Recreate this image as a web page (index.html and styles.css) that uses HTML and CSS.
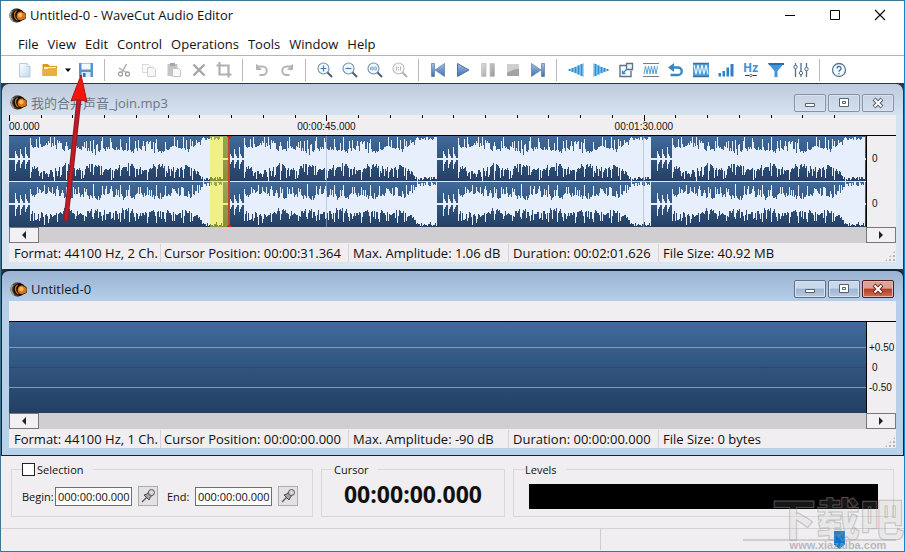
FILE: index.html
```
<!DOCTYPE html>
<html lang="en">
  <head>
    <meta charset="UTF-8">
    <meta name="viewport" content="width=device-width, initial-scale=1">
    <title>Untitled-0 - WaveCut Audio Editor</title>
    <link rel="stylesheet" href="styles.css">
  </head>
  <body>

    <svg class="defs" width="0" height="0" aria-hidden="true">
      <defs>
        <linearGradient id="g-wave" x1="0" y1="0" x2="0" y2="1">
          <stop offset="0" stop-color="#406a9b"/><stop offset="1" stop-color="#233f63"/>
        </linearGradient>
        <linearGradient id="g-play" x1="0" y1="0" x2="0" y2="1">
          <stop offset="0" stop-color="#a3c2e6"/><stop offset="1" stop-color="#3c6cae"/>
        </linearGradient>
        <linearGradient id="g-gray" x1="0" y1="0" x2="1" y2="1">
          <stop offset="0" stop-color="#dcdcdc"/><stop offset="1" stop-color="#989898"/>
        </linearGradient>
        <linearGradient id="g-page" x1="0" y1="0" x2="1" y2="1">
          <stop offset="0" stop-color="#ffffff"/><stop offset="1" stop-color="#bcd9ec"/>
        </linearGradient>
      </defs>
      <symbol id="logo" viewBox="0 0 18 18">
        <circle cx="8" cy="9" r="7.6" fill="#4d4843"/>
        <path d="M3 4a8 8 0 0 0 1 11" fill="none" stroke="#a49a8c" stroke-width="1.6"/>
        <circle cx="10" cy="9" r="6.6" fill="#0c0a09"/>
        <path d="M8 4a6 6 0 0 0 1 10" fill="none" stroke="#c96f1c" stroke-width="1.4"/>
        <circle cx="12.6" cy="9.4" r="4.6" fill="#d9730f"/>
        <circle cx="12" cy="8.6" r="2.4" fill="#ffb75c"/>
        <path d="M14 5.5a4 4 0 0 1 0 8" fill="none" stroke="#5c2a05" stroke-width="1.2"/>
      </symbol>
      <symbol id="pin" viewBox="0 0 16 16">
        <path d="M2 14l5-5" stroke="#555" stroke-width="1.2"/>
        <path d="M4 7l5 5 1.500-3 1.500-1.500L9 3.500 7 6z" fill="#a5a5a5" stroke="#3e3e3e" stroke-width=".9"/>
        <circle cx="11.500" cy="4.500" r="3" fill="#d8d8d8" stroke="#4a4a4a" stroke-width=".9"/>
      </symbol>
    </svg>

    <div class="app">

      <header class="titlebar">
        <svg class="logo"><use href="#logo"/></svg>
        <h1 class="title">Untitled-0 - WaveCut Audio Editor</h1>
        <div class="win-btns">
          <button class="win-btn" aria-label="Minimize"><svg width="12" height="12"><path d="M1 6.500h10" stroke="#000"/></svg></button>
          <button class="win-btn" aria-label="Maximize"><svg width="12" height="12"><path d="M1.500 1.500h9v9h-9z" fill="none" stroke="#000"/></svg></button>
          <button class="win-btn" aria-label="Close"><svg width="12" height="12"><path d="M1 1l10 10M11 1L1 11" stroke="#000" stroke-width="1.1"/></svg></button>
        </div>
      </header>

      <nav class="menu">
        <button>File</button>
        <button>View</button>
        <button>Edit</button>
        <button>Control</button>
        <button>Operations</button>
        <button>Tools</button>
        <button>Window</button>
        <button>Help</button>
      </nav>

      <div class="toolbar" role="toolbar">
        <button class="tool" aria-label="New"><svg viewBox="0 0 16 16"><path d="M2.500 1.500h7.500l3 3v10.500h-10.500z" fill="url(#g-page)" stroke="#b9cbd8"/><path d="M10 1.500v3h3" fill="#fff" stroke="#b9cbd8"/></svg></button>
        <button class="tool" aria-label="Open"><svg viewBox="0 0 16 16"><path d="M.5 2h5.500l1.500 2h7.500v10h-14.500z" fill="#d99a22"/><path d="M2 5h12v3h-12z" fill="#fff3cf"/><path d="M.5 7h5l1-1h8.500v8h-14.500z" fill="#e5b040"/></svg></button>
        <button class="tool tool-caret" aria-label="Recent files"><svg viewBox="0 0 11 16"><path d="M3 6.500h6l-3 3.500z" fill="#000"/></svg></button>
        <button class="tool" aria-label="Save"><svg viewBox="0 0 16 16"><path d="M1 1h14v14h-14z" fill="#5b93cd"/><path d="M3.500 1.500h9v6h-9z" fill="#f3f8fd"/><path d="M3.500 10h9v5h-9z" fill="#dfeaf5"/><path d="M5 11h2.500v4h-2.500z" fill="#3c70ab"/></svg></button>
        <span class="sep"></span>
        <button class="tool" aria-label="Cut"><svg viewBox="0 0 16 16"><path d="M10.500 2L6 10.500M3 6l8 5" fill="none" stroke="#ababab" stroke-width="1.400"/><circle cx="4.500" cy="12" r="2" fill="none" stroke="#a2a2a2" stroke-width="1.300"/><circle cx="11.500" cy="12" r="2" fill="none" stroke="#a2a2a2" stroke-width="1.300"/></svg></button>
        <button class="tool" aria-label="Copy"><svg viewBox="0 0 16 16"><path d="M1.500 2.500h6l2 2v6h-8z" fill="#fafafa" stroke="#d9d9d9"/><path d="M6.500 5.500h6l2 2v7h-8z" fill="#f7f7f7" stroke="#cfcfcf"/></svg></button>
        <button class="tool" aria-label="Paste"><svg viewBox="0 0 16 16"><path d="M1.500 2h10v12h-10z" fill="#c5c5c5"/><path d="M4 1h5v3h-5z" fill="#a7a7a7"/><path d="M6.500 6.500h6l2 2v6h-8z" fill="#f8f8f8" stroke="#c4c4c4"/></svg></button>
        <button class="tool" aria-label="Delete"><svg viewBox="0 0 16 16"><path d="M2.500 2.500l11 11M13.500 2.500l-11 11" stroke="#a6a6a6" stroke-width="2.400"/></svg></button>
        <button class="tool" aria-label="Crop"><svg viewBox="0 0 16 16"><path d="M3.500 0v12.500h12M.5 3.500h12v12" fill="none" stroke="#b0b0b0" stroke-width="2.200"/></svg></button>
        <span class="sep"></span>
        <button class="tool" aria-label="Undo"><svg viewBox="0 0 16 16"><path d="M3 4.500h5.500a4 4 0 0 1 0 8.500h-3" fill="none" stroke="#b4b4b4" stroke-width="2"/><path d="M2 1.500v6.500h6z" fill="#b4b4b4"/></svg></button>
        <button class="tool" aria-label="Redo"><svg viewBox="0 0 16 16"><path d="M13 4.500h-5.500a4 4 0 0 0 0 8.500h3" fill="none" stroke="#b4b4b4" stroke-width="2"/><path d="M14 1.500v6.500h-6z" fill="#b4b4b4"/></svg></button>
        <span class="sep"></span>
        <button class="tool" aria-label="Zoom in"><svg viewBox="0 0 16 16"><circle cx="6.500" cy="6.500" r="5.500" fill="#f4f9fd" stroke="#7590a8" stroke-width="1.100"/><path d="M10.500 10.500l4.500 4.500" stroke="#4b5f72" stroke-width="2"/><path d="M3.500 6.500h6M6.500 3.500v6" stroke="#3c7cc0" stroke-width="1.200"/></svg></button>
        <button class="tool" aria-label="Zoom out"><svg viewBox="0 0 16 16"><circle cx="6.500" cy="6.500" r="5.500" fill="#f4f9fd" stroke="#7590a8" stroke-width="1.100"/><path d="M10.500 10.500l4.500 4.500" stroke="#4b5f72" stroke-width="2"/><path d="M3.500 6.500h6" stroke="#3c7cc0" stroke-width="1.200"/></svg></button>
        <button class="tool" aria-label="Zoom to fit"><svg viewBox="0 0 16 16"><circle cx="6.500" cy="6.500" r="5.500" fill="#f4f9fd" stroke="#7590a8" stroke-width="1.100"/><path d="M10.500 10.500l4.500 4.500" stroke="#4b5f72" stroke-width="2"/><path d="M3.500 5v3M4.800 5h1.400v3h-1.400zM7.800 5h1.600v3h-1.600z" fill="none" stroke="#6ba0d4" stroke-width=".8"/></svg></button>
        <button class="tool" aria-label="Actual size"><svg viewBox="0 0 16 16"><circle cx="6.500" cy="6.500" r="5.500" fill="#fafafa" stroke="#bcbcbc" stroke-width="1.100"/><path d="M10.500 10.500l4.500 4.500" stroke="#b0b0b0" stroke-width="2"/><path d="M4.500 4.500v4M8.500 4.500v4M6.500 5v1M6.500 7.500v1" stroke="#b5b5b5"/></svg></button>
        <span class="sep"></span>
        <button class="tool" aria-label="Go to start"><svg viewBox="0 0 16 16"><path d="M1.500 1.500h3v13h-3zM14.500 1.500v13L5 8z" fill="url(#g-play)" stroke="#6785a8" stroke-width=".8"/></svg></button>
        <button class="tool" aria-label="Play"><svg viewBox="0 0 16 16"><path d="M2.500 1.500v13L14 8z" fill="url(#g-play)" stroke="#4f719d"/></svg></button>
        <button class="tool" aria-label="Pause"><svg viewBox="0 0 16 16"><path d="M1.500 1.500h4.500v13h-4.500zM10 1.500h4.500v13h-4.500z" fill="url(#g-gray)" stroke="#c2c2c2" stroke-width=".8"/></svg></button>
        <button class="tool" aria-label="Stop"><svg viewBox="0 0 16 16"><path d="M2 2.500h12v11.500h-12z" fill="#a3a3a3"/><path d="M2 2.500h12v4Q8 7 2 11z" fill="#cfcfcf"/></svg></button>
        <button class="tool" aria-label="Go to end"><svg viewBox="0 0 16 16"><path d="M11.500 1.500h3v13h-3zM1.500 1.500v13L11 8z" fill="url(#g-play)" stroke="#6785a8" stroke-width=".8"/></svg></button>
        <span class="sep"></span>
        <button class="tool" aria-label="Fade in"><svg viewBox="0 0 16 16"><path d="M0 8L16 1v14z" fill="#9fd2f3"/><path d="M1.500 7v2M4.500 6v4M7.500 5v6M10.500 3.500v9M13.500 2v12" stroke="#2f8fd6" stroke-width="1.800"/></svg></button>
        <button class="tool" aria-label="Fade out"><svg viewBox="0 0 16 16"><path d="M16 8L0 1v14z" fill="#9fd2f3"/><path d="M14.500 7v2M11.500 6v4M8.500 5v6M5.500 3.500v9M2.500 2v12" stroke="#2f8fd6" stroke-width="1.800"/></svg></button>
        <button class="tool" aria-label="Stretch"><svg viewBox="0 0 16 16"><path d="M8 3.500h-6v11h11v-6" fill="none" stroke="#5b7288" stroke-width="1.400"/><path d="M8.500 1.500h6v6h-6z" fill="#eef6fd" stroke="#5b7288" stroke-width="1.300"/><path d="M4.500 11.500l4.500-4.500M4.500 8.500v3h3" fill="none" stroke="#338cd4" stroke-width="1.300"/></svg></button>
        <button class="tool" aria-label="Vibrato"><svg viewBox="0 0 16 16"><path d="M0 1.500h16M0 14.500h16" stroke="#6f7f8e" stroke-width="1.200"/><path d="M1 12l1.500-8M4 12l1.500-8M7 12l1.500-8M10 12l1.500-8M13 12l1.500-8M2.500 4l1.500 8M5.500 4l1.500 8M8.500 4l1.500 8M11.500 4l1.500 8" fill="none" stroke="#55a5dd"/></svg></button>
        <button class="tool" aria-label="Reverse"><svg viewBox="0 0 16 16"><path d="M3 5.500h7a3.700 3.700 0 0 1 0 7.500h-7.500" fill="none" stroke="#3a87c6" stroke-width="2.400"/><path d="M0 5.500L6 1v9z" fill="#3a87c6"/></svg></button>
        <button class="tool" aria-label="Normalize"><svg viewBox="0 0 16 16"><path d="M0 2h16v12h-16z" fill="#4da0dc"/><path d="M1 3l2 9 2-9 2 9 2-9 2 9 2-9 2 9" fill="none" stroke="#e3f3fd" stroke-width="1.200"/><path d="M0 1.500h16M0 14.500h16" stroke="#3f6c94" stroke-width="1.300"/></svg></button>
        <button class="tool" aria-label="Amplify"><svg viewBox="0 0 16 16"><path d="M.5 11h2.500v3.500h-2.500zM4.500 9h2.500v5.500h-2.500zM8.500 5.500h2.500v9h-2.500zM12.500 2h3v12.500h-3z" fill="#2d7fc8"/></svg></button>
        <button class="tool tool-hz" aria-label="Sample rate"><span>Hz</span><svg viewBox="0 0 16 6"><path d="M1 3h5M10 3h5" stroke="#333" stroke-width="1.400"/><circle cx="8" cy="3" r="1.500" fill="none" stroke="#555"/></svg></button>
        <button class="tool" aria-label="Filter"><svg viewBox="0 0 16 16"><path d="M0 1.500h16L9.500 9v6h-3V9z" fill="#3e98da"/><path d="M0 1h16v2h-15z" fill="#2b6da8"/></svg></button>
        <button class="tool" aria-label="Equalizer"><svg viewBox="0 0 16 16"><path d="M2.500 1v14M8 1v14M13.500 1v14" stroke="#4f6f8c" stroke-width="1.300"/><circle cx="2.500" cy="5" r="1.700" fill="#fff" stroke="#4f6f8c"/><circle cx="8" cy="11" r="1.700" fill="#fff" stroke="#4f6f8c"/><circle cx="13.500" cy="7" r="1.700" fill="#fff" stroke="#4f6f8c"/></svg></button>
        <span class="sep"></span>
        <button class="tool" aria-label="Help"><svg viewBox="0 0 16 16"><circle cx="8" cy="8" r="6.500" fill="#f5fafe" stroke="#587897" stroke-width="1.300"/><path d="M6 6.500a2 2 0 1 1 2.800 1.800Q8 8.800 8 9.800M8 11v1.200" fill="none" stroke="#3d6d9c" stroke-width="1.300"/></svg></button>
      </div>

      <main class="workspace">

        <section class="child">
          <header class="child-title">
            <svg class="logo"><use href="#logo"/></svg>
            <h2 class="title">我的合并声音_join.mp3</h2>
            <div class="child-btns">
              <button class="child-btn" aria-label="Minimize"><svg width="14" height="12"><path d="M2.500 6.500h9v3h-9z" fill="#fff" stroke="#566273"/></svg></button>
              <button class="child-btn" aria-label="Restore"><svg width="14" height="12"><path d="M2.500 1.500h9v8h-9z" fill="#fff" stroke="#566273"/><path d="M5.500 4.500h3v2h-3z" fill="none" stroke="#566273"/></svg></button>
              <button class="child-btn" aria-label="Close"><svg width="14" height="12"><path d="M3 2l8 8M11 2l-8 8" stroke="#566273" stroke-width="4"/><path d="M3.500 2.500l7 7M10.500 2.500l-7 7" stroke="#fff" stroke-width="2"/></svg></button>
            </div>
          </header>
          <div class="ruler">
            <div class="ticks" data-count="27"></div>
            <div class="times"><span>00.000</span><span>00:00:45.000</span><span>00:01:30.000</span></div>
          </div>
          <div class="wave-row">
            <svg class="wave" viewBox="0 0 857 91" preserveAspectRatio="none" shape-rendering="crispEdges">
              <rect width="857" height="46" fill="url(#g-wave)"/>
              <rect y="46" width="857" height="45" fill="url(#g-wave)"/>
              <path id="wave-shape" fill="#e6effb"/>
              <rect y="45" width="857" height="1" fill="#d9ece8"/>
              <path d="M317 0h1v91h-1zM634 0h1v91h-1z" fill="#9db4cc" fill-opacity=".6"/>
              <rect x="201" width="19" height="91" fill="#fff000" fill-opacity=".46"/>
              <rect x="219" width="2" height="91" fill="#c8402f"/>
              <path d="M217 0h6l-3 3zM217 91h6l-3-3z" fill="#e01818"/>
            </svg>
            <div class="scale scale-stereo"><span>0</span><span>0</span></div>
          </div>
          <div class="scroll">
            <button class="scroll-btn" aria-label="Scroll left"><svg width="8" height="8"><path d="M6 0v8L2 4z" fill="#222"/></svg></button>
            <button class="scroll-btn" aria-label="Scroll right"><svg width="8" height="8"><path d="M2 0v8l4-4z" fill="#222"/></svg></button>
          </div>
          <footer class="status">
            <span>Format: 44100 Hz, 2 Ch.</span>
            <span>Cursor Position: 00:00:31.364</span>
            <span>Max. Amplitude: 1.06 dB</span>
            <span>Duration: 00:02:01.626</span>
            <span>File Size: 40.92 MB</span>
            <i class="grip"></i>
          </footer>
        </section>

        <section class="child child-active">
          <header class="child-title">
            <svg class="logo"><use href="#logo"/></svg>
            <h2 class="title">Untitled-0</h2>
            <div class="child-btns">
              <button class="child-btn" aria-label="Minimize"><svg width="14" height="12"><path d="M2.500 6.500h9v3h-9z" fill="#fff" stroke="#566273"/></svg></button>
              <button class="child-btn" aria-label="Restore"><svg width="14" height="12"><path d="M2.500 1.500h9v8h-9z" fill="#fff" stroke="#566273"/><path d="M5.500 4.500h3v2h-3z" fill="none" stroke="#566273"/></svg></button>
              <button class="child-btn child-btn-close" aria-label="Close"><svg width="14" height="12"><path d="M3 2l8 8M11 2l-8 8" stroke="#6b2a26" stroke-width="4"/><path d="M3.500 2.500l7 7M10.500 2.500l-7 7" stroke="#fff" stroke-width="2"/></svg></button>
            </div>
          </header>
          <div class="ruler"></div>
          <div class="wave-row">
            <svg class="wave" viewBox="0 0 857 91" preserveAspectRatio="none">
              <rect width="857" height="91" fill="url(#g-wave)"/>
              <path d="M0 25h857v1H0zM0 65h857v1H0z" fill="#7f9cbd"/>
              <path d="M0 45h857v1H0z" fill="#8f1f33"/>
            </svg>
            <div class="scale scale-mono"><span>+0.50</span><span class="zero">0</span><span>-0.50</span></div>
          </div>
          <div class="scroll">
            <button class="scroll-btn" aria-label="Scroll left"><svg width="8" height="8"><path d="M6 0v8L2 4z" fill="#222"/></svg></button>
            <button class="scroll-btn" aria-label="Scroll right"><svg width="8" height="8"><path d="M2 0v8l4-4z" fill="#222"/></svg></button>
          </div>
          <footer class="status">
            <span>Format: 44100 Hz, 1 Ch.</span>
            <span>Cursor Position: 00:00:00.000</span>
            <span>Max. Amplitude: -90 dB</span>
            <span>Duration: 00:00:00.000</span>
            <span>File Size: 0 bytes</span>
            <i class="grip"></i>
          </footer>
        </section>

      </main>

      <form class="panels" action="">
        <fieldset class="panel panel-selection">
          <legend><input type="checkbox" id="selection"><label for="selection">Selection</label></legend>
          <label for="begin">Begin:</label>
          <input class="time" type="text" id="begin" value="000:00:00.000">
          <button type="button" class="pin" aria-label="Set begin"><svg width="16" height="16"><use href="#pin"/></svg></button>
          <label class="label-end" for="end">End:</label>
          <input class="time" type="text" id="end" value="000:00:00.000">
          <button type="button" class="pin" aria-label="Set end"><svg width="16" height="16"><use href="#pin"/></svg></button>
        </fieldset>
        <fieldset class="panel panel-cursor">
          <legend>Cursor</legend>
          <output class="clock">00:00:00.000</output>
        </fieldset>
        <fieldset class="panel panel-levels">
          <legend>Levels</legend>
          <div class="meter"></div>
        </fieldset>
      </form>

      <footer class="app-status">
        <div class="app-status-text"></div>
        <input class="volume" type="range" min="0" max="100" value="64" aria-label="Volume">
      </footer>

      <svg class="arrow" width="40" height="160" viewBox="0 0 40 160" aria-hidden="true">
        <path d="M8 146L21 26" stroke="#8c1c22" stroke-width="5" stroke-linecap="round"/>
        <path d="M8 146L21 26" stroke="#c01a24" stroke-width="3" stroke-linecap="round"/>
        <path d="M23 2L29 29Q21 25 13 28z" fill="#f3160d" stroke="#a8161a" stroke-width="1"/>
      </svg>
      <div class="watermark" aria-hidden="true"><b>下载吧</b><span>www.xiazaiba.com</span></div>

    </div>

    <script src="editor.js"></script>

  </body>
</html>
```
FILE: styles.css
```
* { box-sizing: border-box }
body { margin: 0; background: #f0eef0; color: #111 }
body, button, input { font-family: "Open Sans", "Noto Sans CJK SC", sans-serif; font-size: 13px }
button { border: 0; padding: 0; background: none; color: inherit }
h1, h2 { margin: 0; font-weight: normal }
.defs { position: absolute }

.app {
  position: relative;
  display: flex;
  flex-direction: column;
  min-height: 100vh;
  border: 1px solid #3d7795;
  border-right-color: #1b83c9;
  overflow: hidden;
}

/* title bar and menu */

.titlebar { display: flex; align-items: center; height: 30px; padding: 0 2px 2px 8px; background: #fff }
.logo { width: 17px; height: 17px; margin-right: 4px; flex: none }
.title { flex: 1; font-size: 13px; line-height: 18px }
.win-btns { display: flex }
.win-btn { width: 45px; height: 28px; display: flex; align-items: center; justify-content: center }

.menu { display: flex; gap: 9px; height: 25px; padding-left: 17px; background: #fff; border-bottom: 1px solid #b5b5b5 }
.menu button { line-height: 26px }

/* toolbar */

.toolbar { display: flex; align-items: center; height: 27px; padding-left: 11px; background: #fff }
.tool { width: 25px; height: 26px; display: flex; flex: none; align-items: center; justify-content: center }
.tool svg { width: 16px; height: 16px }
.tool-caret { width: 11px }
.tool-caret svg { width: 11px }
.tool-hz { flex-direction: column; color: #3a93d6; font-weight: bold; font-size: 12px; line-height: 11px }
.tool-hz svg { height: 5px }
.sep { flex: none; width: 13px; height: 22px; background: linear-gradient(#b9b9b9, #b9b9b9) center / 1px 100% no-repeat }

/* document windows */

.workspace { background: #29394d }
.child {
  padding: 0 7px 7px;
  border: 1px solid #29394d;
  border-width: 1px 1px 0;
  border-radius: 8px 8px 0 0;
  background: linear-gradient(#bfcbdc, #d5e2f0 31px, #d9e6f2);
}
.child-active { border-top-width: 2px; border-bottom-width: 1px; border-color: #12243a; background: linear-gradient(#99b3d2, #b6cfe9 31px, #b8d2ea) }
.child-title { display: flex; align-items: center; height: 31px; padding: 6px 2px 0 1px; color: #6d7785 }
.child-active .child-title { height: 30px; color: #141c28 }
.child-btns { display: flex; gap: 2px }
.child-btn {
  display: flex;
  align-items: center;
  justify-content: center;
  width: 32px;
  height: 18px;
  border: 1px solid #8593a8;
  border-radius: 2px;
  box-shadow: inset 0 0 0 1px #d9e3ef;
}
.child-active .child-btn { border-color: #5d7088; background: linear-gradient(#c9d8ea 45%, #9db4d0 50%, #b8cce3) }
.child-active .child-btn-close { border-color: #561a1c; background: linear-gradient(#dda196 45%, #b93a24 50%, #cf7057); box-shadow: inset 0 0 0 1px #e6b5aa }

.ruler { height: 21px; padding-right: 30px; background: #f0eef0; border-bottom: 1px solid #000; font: 10px/12px "Liberation Sans", sans-serif; overflow: hidden }
.ticks { display: flex; height: 6px }
.tick { flex: 1; height: 3px; border-left: 1px solid #000 }
.tick-major { height: 6px }
.times { display: grid; grid-template-columns: 10fr 10fr 7fr }
.times span { justify-self: start; transform: translateX(-50%) }
.times span:first-child { transform: none }

.wave-row { display: grid; grid-template-columns: 1fr 30px; height: 91px }
.wave { display: block; width: 100%; height: 91px }
.scale { display: flex; flex-direction: column; border-left: 1px solid #000; background: #f0eef0; font: 10px/20px "Liberation Sans", sans-serif }
.scale-stereo { justify-content: space-around; padding-left: 5px }
.scale-mono { justify-content: center; padding-left: 2px }
.zero { padding-left: 3px }

.scroll { display: flex; justify-content: space-between; height: 16px; background: #d0ced0 }
.scroll-btn { width: 30px; display: flex; align-items: center; justify-content: center; border: 1px solid #77777c; background: #f2f0f2 }

.status {
  display: grid;
  grid-template-columns: 151px 188px 160px 150px 1fr auto;
  padding-top: 1px;
  background: #f0eef0;
  line-height: 18px;
  white-space: nowrap;
}
.status span { padding-left: 4px; border-left: 1px solid #d5d3d5 }
.status span:first-child { padding-left: 5px; border: 0 }
.status span:nth-child(2) { padding-left: 3px }
.grip {
  align-self: end;
  width: 12px;
  height: 12px;
  background: radial-gradient(#b5b3b5 1px, transparent 1px) 0 0 / 4px 4px;
  clip-path: polygon(100% 0, 100% 100%, 0 100%);
}

/* bottom panels */

.panels { display: grid; grid-template-columns: 302px 184px 1fr; gap: 8px; padding: 6px 10px 11px 9px; border-left: 1px solid #e6f3fb }
.panel { display: flex; align-items: center; min-width: 0; height: 55px; margin: 0; padding: 0 10px; border: 1px solid #d9d7d9; font-size: 11px }
.panel input, .panel legend { font-size: 11px }
.panel legend { display: flex; align-items: center; height: 14px; padding: 0 9px 0 2px }
.panel-selection legend { padding-left: 0 }
.panel-selection legend input { appearance: none; width: 13px; height: 13px; margin: 0 2px 0 0; border: 1px solid #222; background: #fff }
.panel-selection > label { width: 33px }
.panel-selection > .label-end { width: 28px; margin-left: 9px }
.panel-selection > .time { width: 77px; height: 19px; padding: 0 0 0 2px; border: 1px solid #6e6e73; background: #fff; color: #111 }
.pin { display: flex; align-items: center; justify-content: center; width: 20px; height: 20px; margin-left: 6px; border: 1px solid #adabad; background: #e3e1e3 }
.panel-cursor legend { padding-left: 2px }
.panel-levels legend { margin-left: -4px; padding-left: 0 }
.panel-cursor { justify-content: center }
.clock { font-size: 23px; line-height: 26px; font-weight: bold; padding-bottom: 4px }
.panel-levels { padding: 0 15px }
.meter { width: 100%; height: 25px; background: #000 }

/* status line */

.app-status { display: flex; flex: 1; min-height: 23px; border-top: 1px solid #d3d1d3; border-bottom: 1px solid #e6f3fb }
.app-status-text { width: 600px; border-right: 1px solid #cfcdcf }
.volume { appearance: none; width: 153px; height: 20px; margin: 1px 8px 0 auto; background: linear-gradient(#cfcdcf, #cfcdcf) center / 100% 2px no-repeat }
.volume::-webkit-slider-thumb { appearance: none; width: 11px; height: 18px; background: #0b76cf; clip-path: polygon(0 0, 100% 0, 100% 75%, 50% 100%, 0 75%) }

/* overlays */

.arrow { position: absolute; left: 57px; top: 72px }
.watermark { position: absolute; right: 0; bottom: 0; display: flex; flex-direction: column; align-items: center; pointer-events: none }
.watermark b { font: 900 44px/44px "Noto Sans CJK SC", sans-serif; color: rgba(190, 190, 190, .12); -webkit-text-stroke: 1px rgba(150, 150, 150, .5) }
.watermark span { font: bold 11px/12px "Liberation Sans", sans-serif; color: rgba(160, 160, 160, .7) }
```
FILE: editor.js
```
// ruler ticks, every tenth one is long
document.querySelectorAll('.ticks').forEach(function (box) {
  for (var i = 0; i < Number(box.dataset.count); i++) {
    var tick = document.createElement('i');
    tick.className = i % 10 === 0 ? 'tick tick-major' : 'tick';
    box.appendChild(tick);
  }
});

// the joined track is one clip repeated four times
var CLIP = 214;
var seed = 7;

function rnd() {
  seed = (seed * 16807) % 2147483647;
  return seed / 2147483647;
}

function amplitude(i, gain) {
  if (i < 21) {
    if (i < 6) return 1;
    var step = (i - 6) % 5;
    if (step === 0) return 8 + rnd() * 5;
    if (step === 1) return 5;
    return step === 2 ? 3 : 1;
  }
  if (i > 193) return 18 + rnd() * 4;
  var base = (i < 55 ? 9 : 6) + rnd() * 5 + 2 * Math.sin(i / 5);
  if (i > 172) base += (i - 172) / 3;
  var beat = i % 9;
  if (beat === 3) base = 16 + rnd() * 6;
  else if (beat === 4) base += 3;
  else if (rnd() > .82) base += 8;
  return Math.min(22, base * gain);
}

function channel(center, gain) {
  var clip = [];
  for (var i = 0; i < CLIP; i++) clip.push([amplitude(i, gain), amplitude(i, gain)]);
  var d = '';
  for (var x = 0; x < 857; x++) {
    var a = clip[x % CLIP];
    d += 'M' + x + ' ' + (center - a[0]).toFixed(1) + 'h1V' + (center + a[1]).toFixed(1) + 'h-1z';
  }
  return d;
}

document.getElementById('wave-shape').setAttribute('d', channel(22.5, 1) + channel(68, .9));
```
